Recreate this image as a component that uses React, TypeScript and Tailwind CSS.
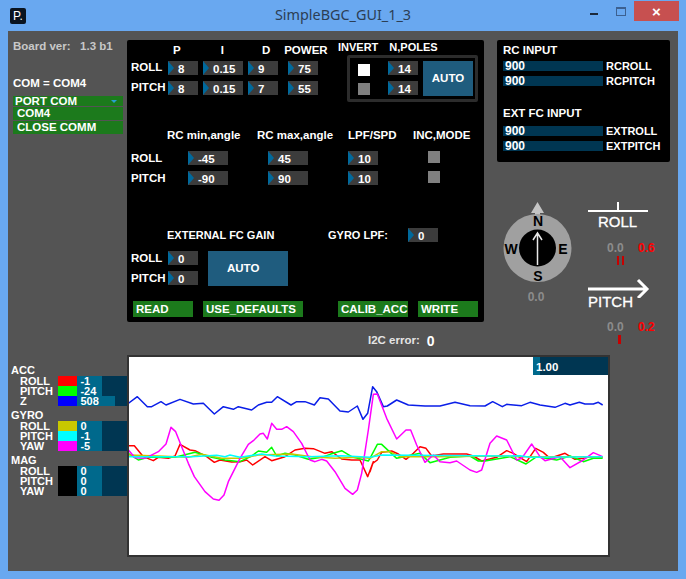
import * as React from 'react';

type Pt = [number, number];

// points were read off two crops of the graph, ox is the crop's left edge
const toPage = (pts: Pt[], ox: number) =>
  pts.map(([x, y]) => `${ox + x / 3},${350 + y / 3}`);

const line = (a: Pt[], b: Pt[]) => [...toPage(a, 125), ...toPage(b, 370)].join(' ');

const series: { color: string; points: string }[] = [
  {
    color: '#ff0000',
    points: line(
      [[10,287],[28,287],[55,320],[85,332],[100,322],[130,325],[150,318],[165,283],[195,300],[210,302],[245,320],[268,337],[285,330],[320,336],[345,335],[365,330],[383,345],[420,320],[440,332],[480,320],[510,300],[540,295],[565,296],[600,310],[620,305],[650,327],[680,330],[705,330],[728,380],[745,335]],
      [[0,365],[8,340],[22,330],[35,307],[65,303],[85,312],[108,328],[130,310],[150,290],[168,295],[185,318],[220,312],[290,312],[310,318],[335,333],[380,322],[410,302],[430,310],[470,335],[497,295],[520,307],[540,325],[585,310],[615,328],[640,325],[660,320],[698,322]],
    ),
  },
  {
    color: '#00ff00',
    points: line(
      [[10,310],[40,330],[70,322],[150,322],[210,307],[260,322],[300,330],[345,335],[380,318],[400,303],[425,307],[440,292],[455,318],[480,310],[510,315],[550,328],[590,322],[615,313],[650,302],[680,320],[730,333]],
      [[0,325],[22,283],[35,283],[80,325],[150,310],[180,338],[240,322],[300,318],[325,333],[345,333],[420,320],[468,342],[500,320],[560,330],[600,318],[640,335],[670,325],[698,325]],
    ),
  },
  {
    color: '#0a1ee8',
    points: line(
      [[10,160],[37,140],[67,170],[80,170],[108,155],[123,165],[165,148],[205,162],[235,160],[268,192],[295,170],[325,178],[340,170],[380,180],[400,165],[425,157],[440,157],[457,140],[498,165],[515,155],[540,155],[568,165],[585,143],[610,147],[645,183],[670,186],[697,168],[714,208],[728,190],[743,110]],
      [[20,125],[40,170],[52,168],[80,150],[115,165],[165,168],[210,168],[255,157],[300,167],[345,168],[368,155],[397,170],[410,163],[455,167],[480,157],[510,165],[555,172],[585,160],[600,165],[628,157],[645,162],[670,162],[685,157],[698,165]],
    ),
  },
  {
    color: '#c8c800',
    points: line(
      [[10,315],[100,318],[190,322],[230,313],[290,325],[350,325],[400,315],[500,312],[560,320],[630,325],[700,322]],
      [[0,325],[35,305],[60,305],[90,320],[200,320],[400,318],[440,320],[698,320]],
    ),
  },
  {
    color: '#ff00ff',
    points: line(
      [[10,300],[30,323],[60,325],[100,305],[123,282],[138,232],[152,245],[170,290],[190,340],[208,380],[240,425],[265,447],[282,451],[297,435],[310,395],[345,325],[370,283],[385,272],[405,252],[415,250],[427,267],[440,220],[455,238],[470,238],[485,230],[505,245],[530,280],[555,330],[570,335],[590,328],[605,333],[630,365],[660,415],[683,433],[697,420],[710,370],[730,240],[745,133]],
      [[22,132],[50,205],[80,267],[108,240],[122,240],[140,285],[165,337],[190,315],[210,335],[240,338],[260,333],[300,360],[320,367],[335,360],[360,280],[380,258],[410,270],[440,330],[455,325],[485,282],[510,320],[525,332],[570,320],[600,353],[640,330],[670,308],[698,320]],
    ),
  },
  {
    color: '#00ffff',
    points: line(
      [[10,320],[100,320],[200,320],[275,316],[300,320],[315,315],[345,322],[410,312],[450,318],[550,320],[650,317]],
      [[0,322],[35,315],[400,318],[450,317],[480,322],[698,320]],
    ),
  },
];

function NumBox({ value, className }: { value: string; className: string }) {
  return (
    <div className={`flex h-[14px] shrink-0 bg-[#3c3c3c] ${className}`}>
      <svg width="6" height="14" viewBox="0 0 6 14" className="shrink-0">
        <polygon points="0,0 6,7 0,14" fill="#00699c" />
      </svg>
      <span className="pl-[4px] pt-px text-[11.5px] font-bold leading-[14px] text-white">{value}</span>
    </div>
  );
}

function GreenButton({ label, className }: { label: string; className: string }) {
  return (
    <div className={`h-4 bg-[#1c7a1c] pl-[3px] text-[11.5px] font-bold leading-4 text-white ${className}`}>
      {label}
    </div>
  );
}

function InputBar({ label }: { label: string }) {
  return (
    <div className="flex h-[10px] items-center">
      <div className="h-[10px] w-[100px] bg-[#003652] pl-[2px] text-[12px] font-bold leading-[10px] text-white">900</div>
      <span className="pl-[3px] text-[11px] font-bold leading-[10px] text-white">{label}</span>
    </div>
  );
}

function MeterGroup({ title, rows }: { title: string; rows: { label: string; swatch: string; value: string; fill: string }[] }) {
  return (
    <div className="mb-[3px]">
      <div className="h-3 pl-[3px] text-[11px] font-bold leading-3 text-white">{title}</div>
      {rows.map((r) => (
        <div key={r.label} className="flex h-[10px] pl-[12px]">
          <span className="w-[38px] text-[11px] font-bold leading-[10px] text-white">{r.label}</span>
          <div className={`w-5 ${r.swatch}`} />
          <div className="h-[10px] w-[50px] bg-[#003652]">
            <div className={`h-[10px] overflow-visible whitespace-nowrap bg-[#00698c] pl-[3px] text-[11px] font-bold leading-[11px] text-white ${r.fill}`}>
              {r.value}
            </div>
          </div>
        </div>
      ))}
    </div>
  );
}

function Compass() {
  return (
    <svg width="80" height="110" viewBox="497 198 80 110" className="shrink-0">
      <polygon points="537.5,202 544,213 540,213 540,222 535,222 535,213 531,213" fill="#c4c4c4" />
      <circle cx="537.5" cy="248" r="34" fill="#a0a0a0" />
      <circle cx="537.5" cy="248" r="18.5" fill="#000" />
      <path d="M537.5 265V233M533 240l4.500-7 4.500 7" fill="none" stroke="#e8e8e8" strokeWidth="1.500" />
      <g fontSize="14" fontWeight="bold" fill="#000" textAnchor="middle" fontFamily="Liberation Sans, sans-serif">
        <text x="538" y="226">N</text>
        <text x="538" y="281">S</text>
        <text x="511" y="254">W</text>
        <text x="563" y="254">E</text>
      </g>
      <text x="536" y="301" fontSize="12" fontWeight="bold" fill="#8c8c8c" textAnchor="middle" fontFamily="Liberation Sans, sans-serif">0.0</text>
    </svg>
  );
}

function Readout({ angle, children }: { angle: string; children: React.ReactNode }) {
  return (
    <>
      <div className="flex h-[14px] pl-[19px] text-[12px] font-bold leading-[14px]">
        <span className="w-[31px] text-[#8c8c8c]">0.0</span>
        <span className="text-[#ff0000]">{angle}</span>
      </div>
      <div className="mt-[1px] flex h-[9px] gap-[3px] pl-[29px]">{children}</div>
    </>
  );
}

export default function App() {
  return (
    <div className="flex h-[579px] w-[686px] flex-col overflow-hidden bg-[#69a8f0] font-['Liberation_Sans',sans-serif]">
      {/* title bar */}
      <div className="relative flex h-[31px] shrink-0 items-center justify-center">
        <div className="absolute left-[10px] top-[8px] flex h-4 w-4 items-center justify-center rounded-[2px] bg-[#0a1420] text-[12px] leading-none text-white">
          P.
        </div>
        <span className="font-['Noto_Sans',sans-serif] text-[14.4px] leading-none text-[#2c3e54]">SimpleBGC_GUI_1_3</span>
        <div className="absolute left-[590px] top-[13px] h-[2px] w-[8px] bg-[#1c2a3c]" />
        <div className="absolute left-[616px] top-[7px] h-[9px] w-[10px] border border-t-2 border-[#3c6090]" />
        <div className="absolute left-[634px] top-px flex h-5 w-[45px] items-center justify-center bg-[#c75050] text-[15px] font-bold leading-none text-white">
          ×
        </div>
      </div>

      {/* canvas */}
      <div className="mx-[8px] flex h-[540px] w-[670px] flex-col bg-[#545454]">
        <div className="flex h-[291px] shrink-0 pt-[9px]">
          {/* board + port */}
          <div className="w-[119px] shrink-0 pl-[5px]">
            <div className="whitespace-nowrap text-[11.5px] font-bold leading-[13px] text-[#c8c8c8]">Board ver:&nbsp;&nbsp;&nbsp;1.3 b1</div>
            <div className="mt-[24px] text-[11.5px] font-bold leading-[13px] text-white">COM = COM4</div>
            <div className="mt-[6px] w-[110px] text-[11.5px] font-bold text-white">
              <div className="flex h-[10px] items-center justify-between bg-[#1c7a1c] pl-[2px] pr-[6px] leading-[10px]">
                <span>PORT COM</span>
                <span className="h-0 w-0 border-x-[3px] border-t-[3px] border-x-transparent border-t-[#27a0d0]" />
              </div>
              <div className="mt-px h-[13px] bg-[#1c7a1c] pl-[4px] leading-[13px]">COM4</div>
              <div className="mt-px h-[13px] bg-[#1c7a1c] pl-[4px] leading-[13px]">CLOSE COMM</div>
            </div>
          </div>

          {/* settings panel */}
          <div className="flex h-[282px] w-[357px] shrink-0 flex-col rounded-[2px] bg-black text-[11.5px] font-bold text-white">
            <div className="flex h-[62px]">
              <div className="w-[220px] shrink-0">
                <div className="flex h-[21px] items-center leading-none">
                  <span className="ml-[46px]">P</span>
                  <span className="ml-[40px]">I</span>
                  <span className="ml-[38px]">D</span>
                  <span className="ml-[14px]">POWER</span>
                </div>
                <div className="flex h-[14px] items-center leading-none">
                  <span className="ml-[4px] w-[37px]">ROLL</span>
                  <NumBox value="8" className="w-[30px]" />
                  <NumBox value="0.15" className="ml-[5px] w-[40px]" />
                  <NumBox value="9" className="ml-[5px] w-[30px]" />
                  <NumBox value="75" className="ml-[10px] w-[30px]" />
                </div>
                <div className="mt-[6px] flex h-[14px] items-center leading-none">
                  <span className="ml-[4px] w-[37px]">PITCH</span>
                  <NumBox value="8" className="w-[30px]" />
                  <NumBox value="0.15" className="ml-[5px] w-[40px]" />
                  <NumBox value="7" className="ml-[5px] w-[30px]" />
                  <NumBox value="55" className="ml-[10px] w-[30px]" />
                </div>
              </div>
              <div className="w-[131px] shrink-0">
                <div className="flex h-[15px] items-center whitespace-nowrap text-[11px] leading-none">
                  <span className="ml-[-9px]">INVERT</span>
                  <span className="ml-[11px]">N,POLES</span>
                </div>
                <div className="flex h-[47px] rounded-[2px] border-[3px] border-[#2c2c2c]">
                  <div className="ml-[8px] mt-[6px] flex w-[30px] flex-col gap-[7px]">
                    <div className="h-3 w-3 bg-white" />
                    <div className="h-3 w-3 bg-[#808080]" />
                  </div>
                  <div className="mt-[3px] flex flex-col gap-[6px]">
                    <NumBox value="14" className="w-[30px]" />
                    <NumBox value="14" className="w-[30px]" />
                  </div>
                  <div className="ml-[5px] mt-[3px] flex h-[35px] w-[50px] items-center justify-center bg-[#1f5c7e] leading-none">AUTO</div>
                </div>
              </div>
            </div>

            <div className="mt-[27px] flex h-[13px] items-center leading-none">
              <span className="ml-[40px] w-[90px]">RC min,angle</span>
              <span className="w-[91px]">RC max,angle</span>
              <span className="w-[65px]">LPF/SPD</span>
              <span>INC,MODE</span>
            </div>
            <div className="mt-[9px] flex h-[14px] items-center leading-none">
              <span className="ml-[4px] w-[57px] pt-px">ROLL</span>
              <NumBox value="-45" className="w-[40px]" />
              <NumBox value="45" className="ml-[40px] w-[40px]" />
              <NumBox value="10" className="ml-[40px] w-[30px]" />
              <div className="ml-[50px] h-3 w-3 self-start bg-[#808080]" />
            </div>
            <div className="mt-[6px] flex h-[14px] items-center leading-none">
              <span className="ml-[4px] w-[57px] pt-px">PITCH</span>
              <NumBox value="-90" className="w-[40px]" />
              <NumBox value="90" className="ml-[40px] w-[40px]" />
              <NumBox value="10" className="ml-[40px] w-[30px]" />
              <div className="ml-[50px] h-3 w-3 self-start bg-[#808080]" />
            </div>

            <div className="mt-[43px] flex h-[14px] items-center text-[11px] leading-none">
              <span className="ml-[40px] w-[161px]">EXTERNAL FC GAIN</span>
              <span className="w-[80px]">GYRO LPF:</span>
              <NumBox value="0" className="w-[30px]" />
            </div>
            <div className="mt-[9px] flex h-[35px]">
              <div className="flex flex-col gap-[6px] leading-none">
                <div className="flex h-[14px] items-center">
                  <span className="ml-[4px] w-[37px] pt-px">ROLL</span>
                  <NumBox value="0" className="w-[30px]" />
                </div>
                <div className="flex h-[14px] items-center">
                  <span className="ml-[4px] w-[37px] pt-px">PITCH</span>
                  <NumBox value="0" className="w-[30px]" />
                </div>
              </div>
              <div className="ml-[10px] flex h-[35px] w-[80px] items-center bg-[#1f5c7e] pl-[19px] leading-none">AUTO</div>
            </div>
            <div className="mt-[15px] flex">
              <GreenButton label="READ" className="ml-[6px] w-[60px]" />
              <GreenButton label="USE_DEFAULTS" className="ml-[10px] w-[100px]" />
              <GreenButton label="CALIB_ACC" className="ml-[35px] w-[70px]" />
              <GreenButton label="WRITE" className="ml-[10px] w-[60px]" />
            </div>
          </div>

          {/* rc input + attitude */}
          <div className="ml-[13px] w-[173px] shrink-0">
            <div className="h-[122px] rounded-[2px] bg-black pl-[6px] text-[11.5px] font-bold text-white">
              <div className="flex h-[21px] items-center leading-none">RC INPUT</div>
              <div className="flex flex-col gap-[5px]">
                <InputBar label="RCROLL" />
                <InputBar label="RCPITCH" />
              </div>
              <div className="mt-[21px] flex h-[14px] items-center leading-none">EXT FC INPUT</div>
              <div className="mt-[5px] flex flex-col gap-[5px]">
                <InputBar label="EXTROLL" />
                <InputBar label="EXTPITCH" />
              </div>
            </div>
            <div className="mt-[36px] flex">
              <Compass />
              <div className="ml-[11px] flex w-[70px] flex-col">
                <svg width="60" height="14" viewBox="0 0 60 14" className="mt-[3px] shrink-0">
                  <path d="M0 10h60M30 1v9" stroke="#fff" strokeWidth="2" />
                </svg>
                <div className="h-[13px] pl-[10px] text-[15px] font-normal leading-[13px] text-white [-webkit-text-stroke:0.3px_white]">ROLL</div>
                <div className="mt-[13px]">
                  <Readout angle="0.6">
                    <div className="w-[2px] bg-[#c80000]" />
                    <div className="w-[2px] bg-[#c80000]" />
                  </Readout>
                </div>
                <svg width="62" height="20" viewBox="0 0 62 20" className="mt-[13px] shrink-0">
                  <path d="M0 11h58M50 2l9 9-9 9" fill="none" stroke="#fff" strokeWidth="3" />
                </svg>
                <div className="mt-[-3px] h-[13px] text-[15px] font-normal leading-[13px] text-white [-webkit-text-stroke:0.3px_white]">PITCH</div>
                <div className="mt-[12px]">
                  <Readout angle="0.2">
                    <div className="ml-px w-[3px] bg-[#c80000]" />
                  </Readout>
                </div>
              </div>
            </div>
          </div>
        </div>

        <div className="flex h-[33px] shrink-0 items-center pl-[360px] pt-[5px] text-[11.5px] font-bold leading-none text-[#e4e4e4]">
          <span>I2C error:</span>
          <span className="ml-[7px] text-[14px] text-white">0</span>
        </div>

        <div className="flex">
          <div className="w-[119px] shrink-0 pt-[9px]">
            <MeterGroup
              title="ACC"
              rows={[
                { label: 'ROLL', swatch: 'bg-[#ff0000]', value: '-1', fill: 'w-[25px]' },
                { label: 'PITCH', swatch: 'bg-[#00ff00]', value: '-24', fill: 'w-[25px]' },
                { label: 'Z', swatch: 'bg-[#0000ff]', value: '508', fill: 'w-[38px]' },
              ]}
            />
            <MeterGroup
              title="GYRO"
              rows={[
                { label: 'ROLL', swatch: 'bg-[#c8c800]', value: '0', fill: 'w-[25px]' },
                { label: 'PITCH', swatch: 'bg-[#00ffff]', value: '-1', fill: 'w-[25px]' },
                { label: 'YAW', swatch: 'bg-[#ff00ff]', value: '-5', fill: 'w-[25px]' },
              ]}
            />
            <MeterGroup
              title="MAG"
              rows={[
                { label: 'ROLL', swatch: 'bg-black', value: '0', fill: 'w-[25px]' },
                { label: 'PITCH', swatch: 'bg-black', value: '0', fill: 'w-[25px]' },
                { label: 'YAW', swatch: 'bg-black', value: '0', fill: 'w-[25px]' },
              ]}
            />
          </div>

          {/* graph */}
          <div className="relative h-[202px] w-[483px] shrink-0 border-2 border-[#333333] bg-white">
            <svg width="479" height="198" viewBox="129 357 479 198" className="block">
              {series.map((s) => (
                <polyline key={s.color} points={s.points} fill="none" stroke={s.color} strokeWidth="1.500" strokeLinejoin="round" />
              ))}
            </svg>
            <div className="absolute right-0 top-0 h-[18px] w-[75px] bg-[#003652]">
              <div className="h-[18px] w-[7px] bg-[#00698c]" />
              <span className="absolute left-[3px] top-[4px] text-[11.5px] font-bold leading-[12px] text-white">1.00</span>
            </div>
          </div>
        </div>
      </div>
    </div>
  );
}
